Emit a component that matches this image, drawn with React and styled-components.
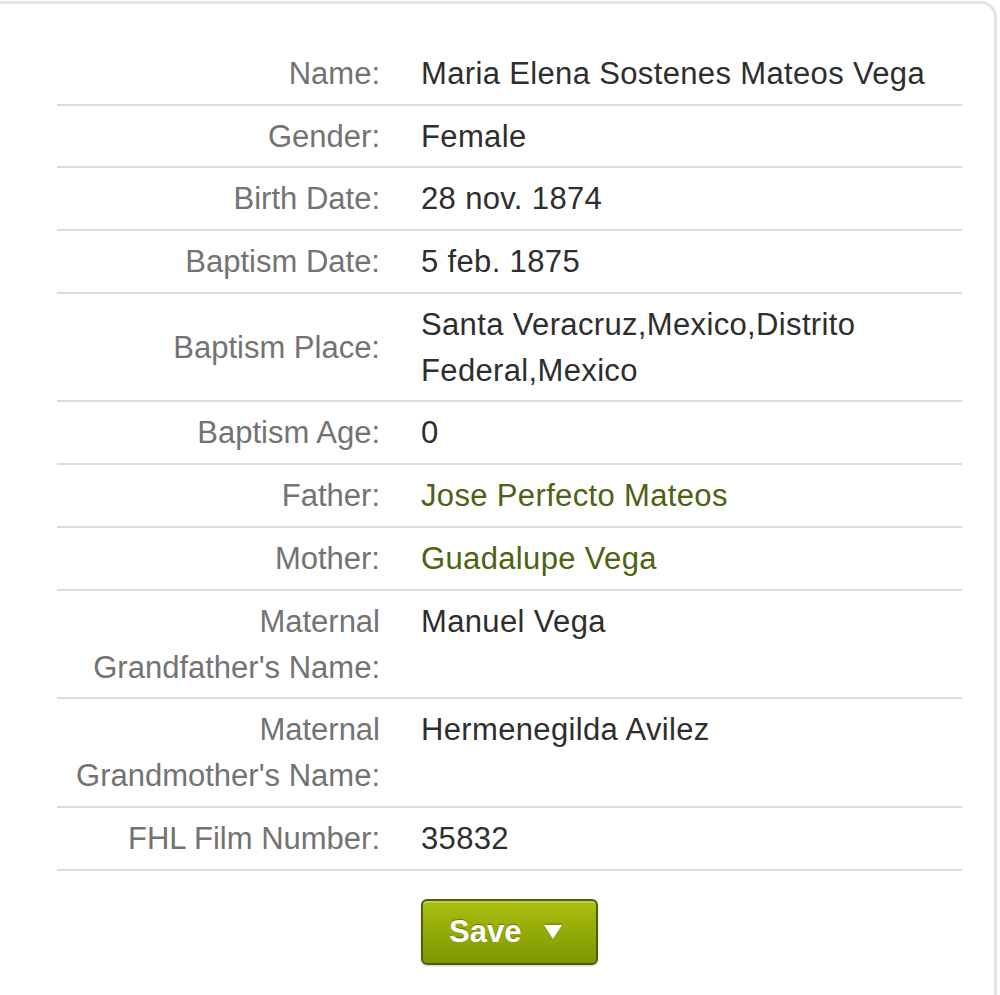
import React from 'react';
import styled, { createGlobalStyle } from 'styled-components';

const GlobalStyle = createGlobalStyle`
	html, body {
		margin: 0;
		padding: 0;
		background: #ffffff;
	}
	body {
		font-family: 'Liberation Sans', Arial, sans-serif;
	}
`;

const record = [
	{ label: 'Name:', value: 'Maria Elena Sostenes Mateos Vega' },
	{ label: 'Gender:', value: 'Female' },
	{ label: 'Birth Date:', value: '28 nov. 1874' },
	{ label: 'Baptism Date:', value: '5 feb. 1875' },
	{ label: 'Baptism Place:', value: 'Santa Veracruz,Mexico,Distrito Federal,Mexico', center: true },
	{ label: 'Baptism Age:', value: '0' },
	{ label: 'Father:', value: 'Jose Perfecto Mateos', link: true },
	{ label: 'Mother:', value: 'Guadalupe Vega', link: true },
	{ label: ['Maternal', "Grandfather's Name:"], value: 'Manuel Vega' },
	{ label: ['Maternal', "Grandmother's Name:"], value: 'Hermenegilda Avilez' },
	{ label: 'FHL Film Number:', value: '35832' },
];

export default function App() {
	return (
		<>
			<GlobalStyle />
			<Card>
				<Table>
					{record.map((row, i) => (
						<Row key={i}>
							<Label $center={row.center}>
								{Array.isArray(row.label)
									? row.label.map((l) => <div key={l}>{l}</div>)
									: row.label}
							</Label>
							<Value>{row.link ? <PersonLink href="#">{row.value}</PersonLink> : row.value}</Value>
						</Row>
					))}
				</Table>
				<Actions>
					<SaveButton type="button">
						Save
						<svg width="18" height="14" viewBox="0 0 18 14">
							<path d="M0 0 H18 L9 14 Z" fill="#fff" />
						</svg>
					</SaveButton>
				</Actions>
			</Card>
		</>
	);
}

const Card = styled.div`
	box-sizing: border-box;
	width: 997px;
	min-height: 995px;
	border-top: 3px solid #e3e3df;
	border-right: 3px solid #e3e3df;
	border-top-right-radius: 16px;
	margin-top: 1px;
	padding: 39px 0 0 57px;
	background: #fff;
`;

const Table = styled.div`
	width: 905px;
`;

const Row = styled.div`
	display: grid;
	grid-template-columns: 323px 1fr;
	column-gap: 41px;
	padding: 8px 0 6.7px;
	border-bottom: 2px solid #dcdcdc;
	font-size: 31px;
	line-height: 46px;
`;

const Label = styled.div`
	text-align: right;
	color: #737373;
	align-self: ${(p) => (p.$center ? 'center' : 'start')};
`;

const Value = styled.div`
	color: #2e2e2e;
	letter-spacing: 0.35px;
`;

const PersonLink = styled.a`
	color: #4d6212;
	text-decoration: none;
`;

const Actions = styled.div`
	padding: 28px 0 0 364px;
`;

const SaveButton = styled.button`
	box-sizing: border-box;
	width: 177px;
	height: 66px;
	border: 2px solid #4e5e0c;
	border-radius: 6px;
	background: linear-gradient(#aabf0e, #7d9702);
	box-shadow: inset 0 2px 0 rgba(255, 255, 255, 0.25), 0 1px 2px rgba(0, 0, 0, 0.2);
	color: #fff;
	font-family: 'Liberation Sans', Arial, sans-serif;
	font-weight: bold;
	font-size: 31px;
	text-shadow: 0 -1px 1px rgba(0, 0, 0, 0.35);
	display: flex;
	align-items: center;
	justify-content: flex-start;
	gap: 23px;
	cursor: pointer;
	padding: 0 0 0 26px;

	svg {
		filter: drop-shadow(0 -1px 1px rgba(0, 0, 0, 0.3));
	}
`;
